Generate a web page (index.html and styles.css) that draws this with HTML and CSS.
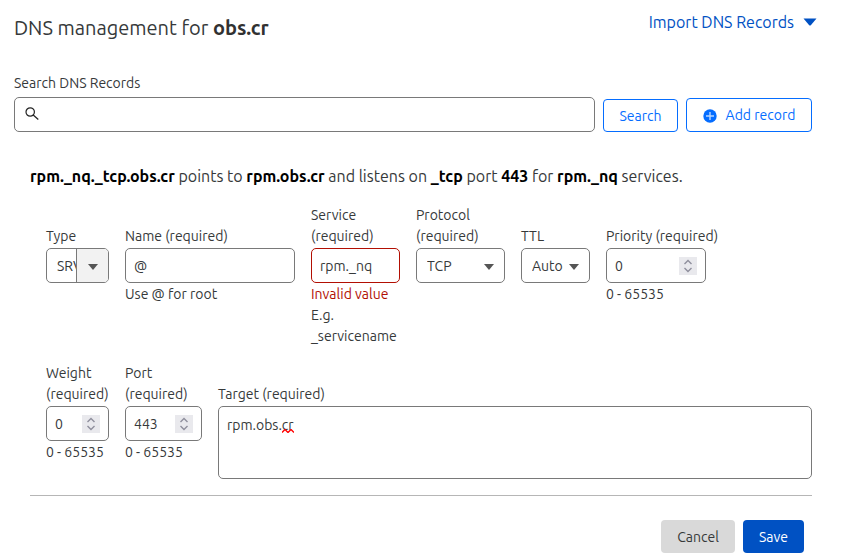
FILE: index.html
```html
<!DOCTYPE html>
<html lang="en">
<head>
<meta charset="utf-8">
<meta name="viewport" content="width=device-width, initial-scale=1">
<title>DNS management</title>
<link rel="stylesheet" href="styles.css">
</head>
<body>
<main class="page">
  <header class="header">
    <h1 class="title">DNS management for <strong>obs.cr</strong></h1>
    <button class="import" type="button">Import DNS Records
      <svg class="import-caret" viewBox="0 0 14 8" aria-hidden="true"><path d="M0.500 0.500H13.500L8 7Q7 8 6 7Z"/></svg>
    </button>
  </header>

  <form class="search">
    <div class="search-field">
      <label for="q">Search DNS Records</label>
      <div class="control">
        <input class="box search-input" id="q" type="text">
        <svg class="search-icon" viewBox="0 0 14 14" aria-hidden="true"><circle cx="5.200" cy="5" r="4.200"/><path d="M8.200 8L13.300 12.500"/></svg>
      </div>
    </div>
    <button class="btn btn-outline" type="button">Search</button>
    <button class="btn btn-outline btn-add" type="button">
      <svg class="plus" viewBox="0 0 14 14" aria-hidden="true"><circle cx="7" cy="7" r="6.700"/><path d="M7 3V11M3 7H11"/></svg>
      Add record
    </button>
  </form>

  <form class="record">
    <p class="summary"><strong>rpm._nq._tcp.obs.cr</strong> points to <strong>rpm.obs.cr</strong> and listens on <strong>_tcp</strong> port <strong>443</strong> for <strong>rpm._nq</strong> services.</p>

    <div class="fields">
      <div class="field field-type">
        <label for="type">Type</label>
        <div class="control">
          <select class="box" id="type"><option>SRV</option></select>
          <span class="type-arrow"><svg class="caret" viewBox="0 0 10 6" aria-hidden="true"><path d="M0 0H10L5 6Z"/></svg></span>
        </div>
      </div>
      <div class="field field-name">
        <label for="name">Name (required)</label>
        <div class="control"><input class="box" id="name" type="text" value="@"></div>
        <p class="help">Use @ for root</p>
      </div>
      <div class="field field-medium">
        <label for="service">Service (required)</label>
        <div class="control"><input class="box box-error" id="service" type="text" value="rpm._nq" spellcheck="false"></div>
        <p class="help"><span class="error">Invalid value</span><br>E.g. _servicename</p>
      </div>
      <div class="field field-medium">
        <label for="protocol">Protocol (required)</label>
        <div class="control">
          <select class="box" id="protocol"><option>TCP</option></select>
          <svg class="caret select-caret" viewBox="0 0 10 6" aria-hidden="true"><path d="M0 0H10L5 6Z"/></svg>
        </div>
      </div>
      <div class="field field-ttl">
        <label for="ttl">TTL</label>
        <div class="control">
          <select class="box" id="ttl"><option>Auto</option></select>
          <svg class="caret select-caret" viewBox="0 0 10 6" aria-hidden="true"><path d="M0 0H10L5 6Z"/></svg>
        </div>
      </div>
      <div class="field field-priority">
        <label for="priority">Priority (required)</label>
        <div class="control">
          <input class="box" id="priority" type="number" value="0" min="0" max="65535">
          <svg class="spinner" viewBox="0 0 18 18" aria-hidden="true"><path d="M5.500 7L9 3.500L12.500 7M5.500 11L9 14.500L12.500 11"/></svg>
        </div>
        <p class="help">0 - 65535</p>
      </div>
    </div>

    <div class="fields">
      <div class="field field-type">
        <label for="weight">Weight (required)</label>
        <div class="control">
          <input class="box" id="weight" type="number" value="0" min="0" max="65535">
          <svg class="spinner" viewBox="0 0 18 18" aria-hidden="true"><path d="M5.500 7L9 3.500L12.500 7M5.500 11L9 14.500L12.500 11"/></svg>
        </div>
        <p class="help">0 - 65535</p>
      </div>
      <div class="field field-port">
        <label for="port">Port (required)</label>
        <div class="control">
          <input class="box" id="port" type="number" value="443" min="0" max="65535">
          <svg class="spinner" viewBox="0 0 18 18" aria-hidden="true"><path d="M5.500 7L9 3.500L12.500 7M5.500 11L9 14.500L12.500 11"/></svg>
        </div>
        <p class="help">0 - 65535</p>
      </div>
      <div class="field field-target">
        <label for="target">Target (required)</label>
        <div class="control">
          <textarea class="box target" id="target" spellcheck="false">rpm.obs.cr</textarea>
          <svg class="squiggle" viewBox="0 0 12 4" aria-hidden="true"><path d="M0 3.500L3 0.500L6 3.500L9 0.500L12 3.500"/></svg>
        </div>
      </div>
    </div>

    <div class="actions">
      <button class="btn btn-cancel" type="button">Cancel</button>
      <button class="btn btn-save" type="button">Save</button>
    </div>
  </form>
</main>
</body>
</html>
```
FILE: styles.css
```css
* {
  box-sizing: border-box;
}

body {
  margin: 0;
  background: #fff;
  color: #36393a;
  font: 14px/21px Ubuntu, "Noto Sans", sans-serif;
}

button,
input,
select,
textarea {
  margin: 0;
  color: inherit;
  font: inherit;
}

p {
  margin: 0;
}

.page {
  padding: 8px 30px 0 14px;
}

.header {
  display: flex;
  justify-content: space-between;
  align-items: flex-start;
  margin-right: -5px;
}

.title {
  margin: 4px 0 0;
  font-size: 20px;
  line-height: 32px;
  font-weight: 400;
}

.title strong {
  color: #313131;
}

.import {
  display: flex;
  align-items: center;
  gap: 9px;
  padding: 0;
  border: 0;
  background: none;
  color: #0051c3;
  font-size: 16px;
  line-height: 28px;
}

.import-caret {
  width: 14px;
  height: 8px;
  fill: #0051c3;
}

.search {
  display: flex;
  align-items: flex-end;
  gap: 8px;
  margin-top: 29px;
}

.search-field {
  flex: 1;
}

.search-field label {
  display: block;
  margin-bottom: 3px;
}

.control {
  position: relative;
}

.box {
  display: block;
  width: 100%;
  height: 35px;
  padding: 0 8px;
  border: 1px solid #797979;
  border-radius: 5px;
  outline: 0;
  background: #fff;
  appearance: none;
}

select.box {
  padding: 2px 0 0 10px;
}

.box-error {
  border-color: #b20f03;
}

input[type="number"] {
  appearance: textfield;
}

.search-input {
  padding-left: 34px;
}

.search-icon {
  position: absolute;
  left: 11px;
  top: 10px;
  width: 14px;
  height: 14px;
  fill: none;
  stroke: #222;
  stroke-width: 1.2;
}

.btn {
  height: 33px;
  padding: 2px 15px 0;
  border: 1px solid transparent;
  border-radius: 4px;
}

.btn-outline {
  width: 75px;
  border-color: #056dff;
  background: #fff;
  color: #056dff;
}

.btn-add {
  display: flex;
  align-items: center;
  justify-content: center;
  gap: 9px;
  width: 126px;
  height: 34px;
  padding: 1px 0 0;
}

.plus {
  width: 14px;
  height: 14px;
  fill: #056dff;
  stroke: #b9d6ff;
  stroke-width: 1.4;
}

.plus circle {
  stroke: none;
}

.record {
  padding-left: 16px;
}

.summary {
  margin: 32px 0 16px;
  font-size: 16px;
  line-height: 25px;
}

.summary strong {
  color: #000;
}

.fields {
  display: flex;
  align-items: flex-start;
  gap: 16px;
  padding-left: 16px;
}

.fields + .fields {
  margin-top: 16px;
}

.field label {
  display: flex;
  align-items: flex-end;
  height: 42px;
  margin-bottom: 1px;
}

.help {
  margin-top: 1px;
}

.error {
  color: #b20f03;
}

.field-type {
  width: 63px;
}

.field-name {
  width: 170px;
}

.field-medium {
  width: 89px;
}

.field-ttl {
  width: 69px;
}

.field-priority {
  width: 100px;
}

.field-priority label {
  white-space: nowrap;
}

.field-port {
  width: 77px;
}

.field-target {
  flex: 1;
}

.caret {
  width: 10px;
  height: 6px;
  fill: #555;
}

.select-caret {
  position: absolute;
  top: 16px;
  right: 11px;
  pointer-events: none;
}

.type-arrow {
  position: absolute;
  top: 1px;
  right: 1px;
  bottom: 1px;
  display: flex;
  align-items: center;
  justify-content: center;
  width: 32px;
  padding-top: 2px;
  border-left: 1px solid #797979;
  border-radius: 0 4px 4px 0;
  background: #f2f2f2;
  pointer-events: none;
}

.spinner {
  position: absolute;
  top: 9px;
  right: 9px;
  width: 18px;
  height: 18px;
  background: #e9e9ed;
  fill: none;
  stroke: #8f8f9d;
  stroke-width: 1.4;
  pointer-events: none;
}

.target {
  height: 73px;
  padding: 8px;
  resize: none;
}

.squiggle {
  position: absolute;
  left: 64px;
  top: 23px;
  width: 12px;
  height: 4px;
  fill: none;
  stroke: #f00;
  stroke-width: 1.4;
  pointer-events: none;
}

.actions {
  display: flex;
  justify-content: flex-end;
  gap: 8px;
  margin-top: 16px;
  padding: 24px 8px 0 0;
  border-top: 1px solid #b6b6b6;
}

.btn-cancel {
  background: #d9d9d9;
}

.btn-save {
  background: #0051c3;
  color: #fff;
}
```
